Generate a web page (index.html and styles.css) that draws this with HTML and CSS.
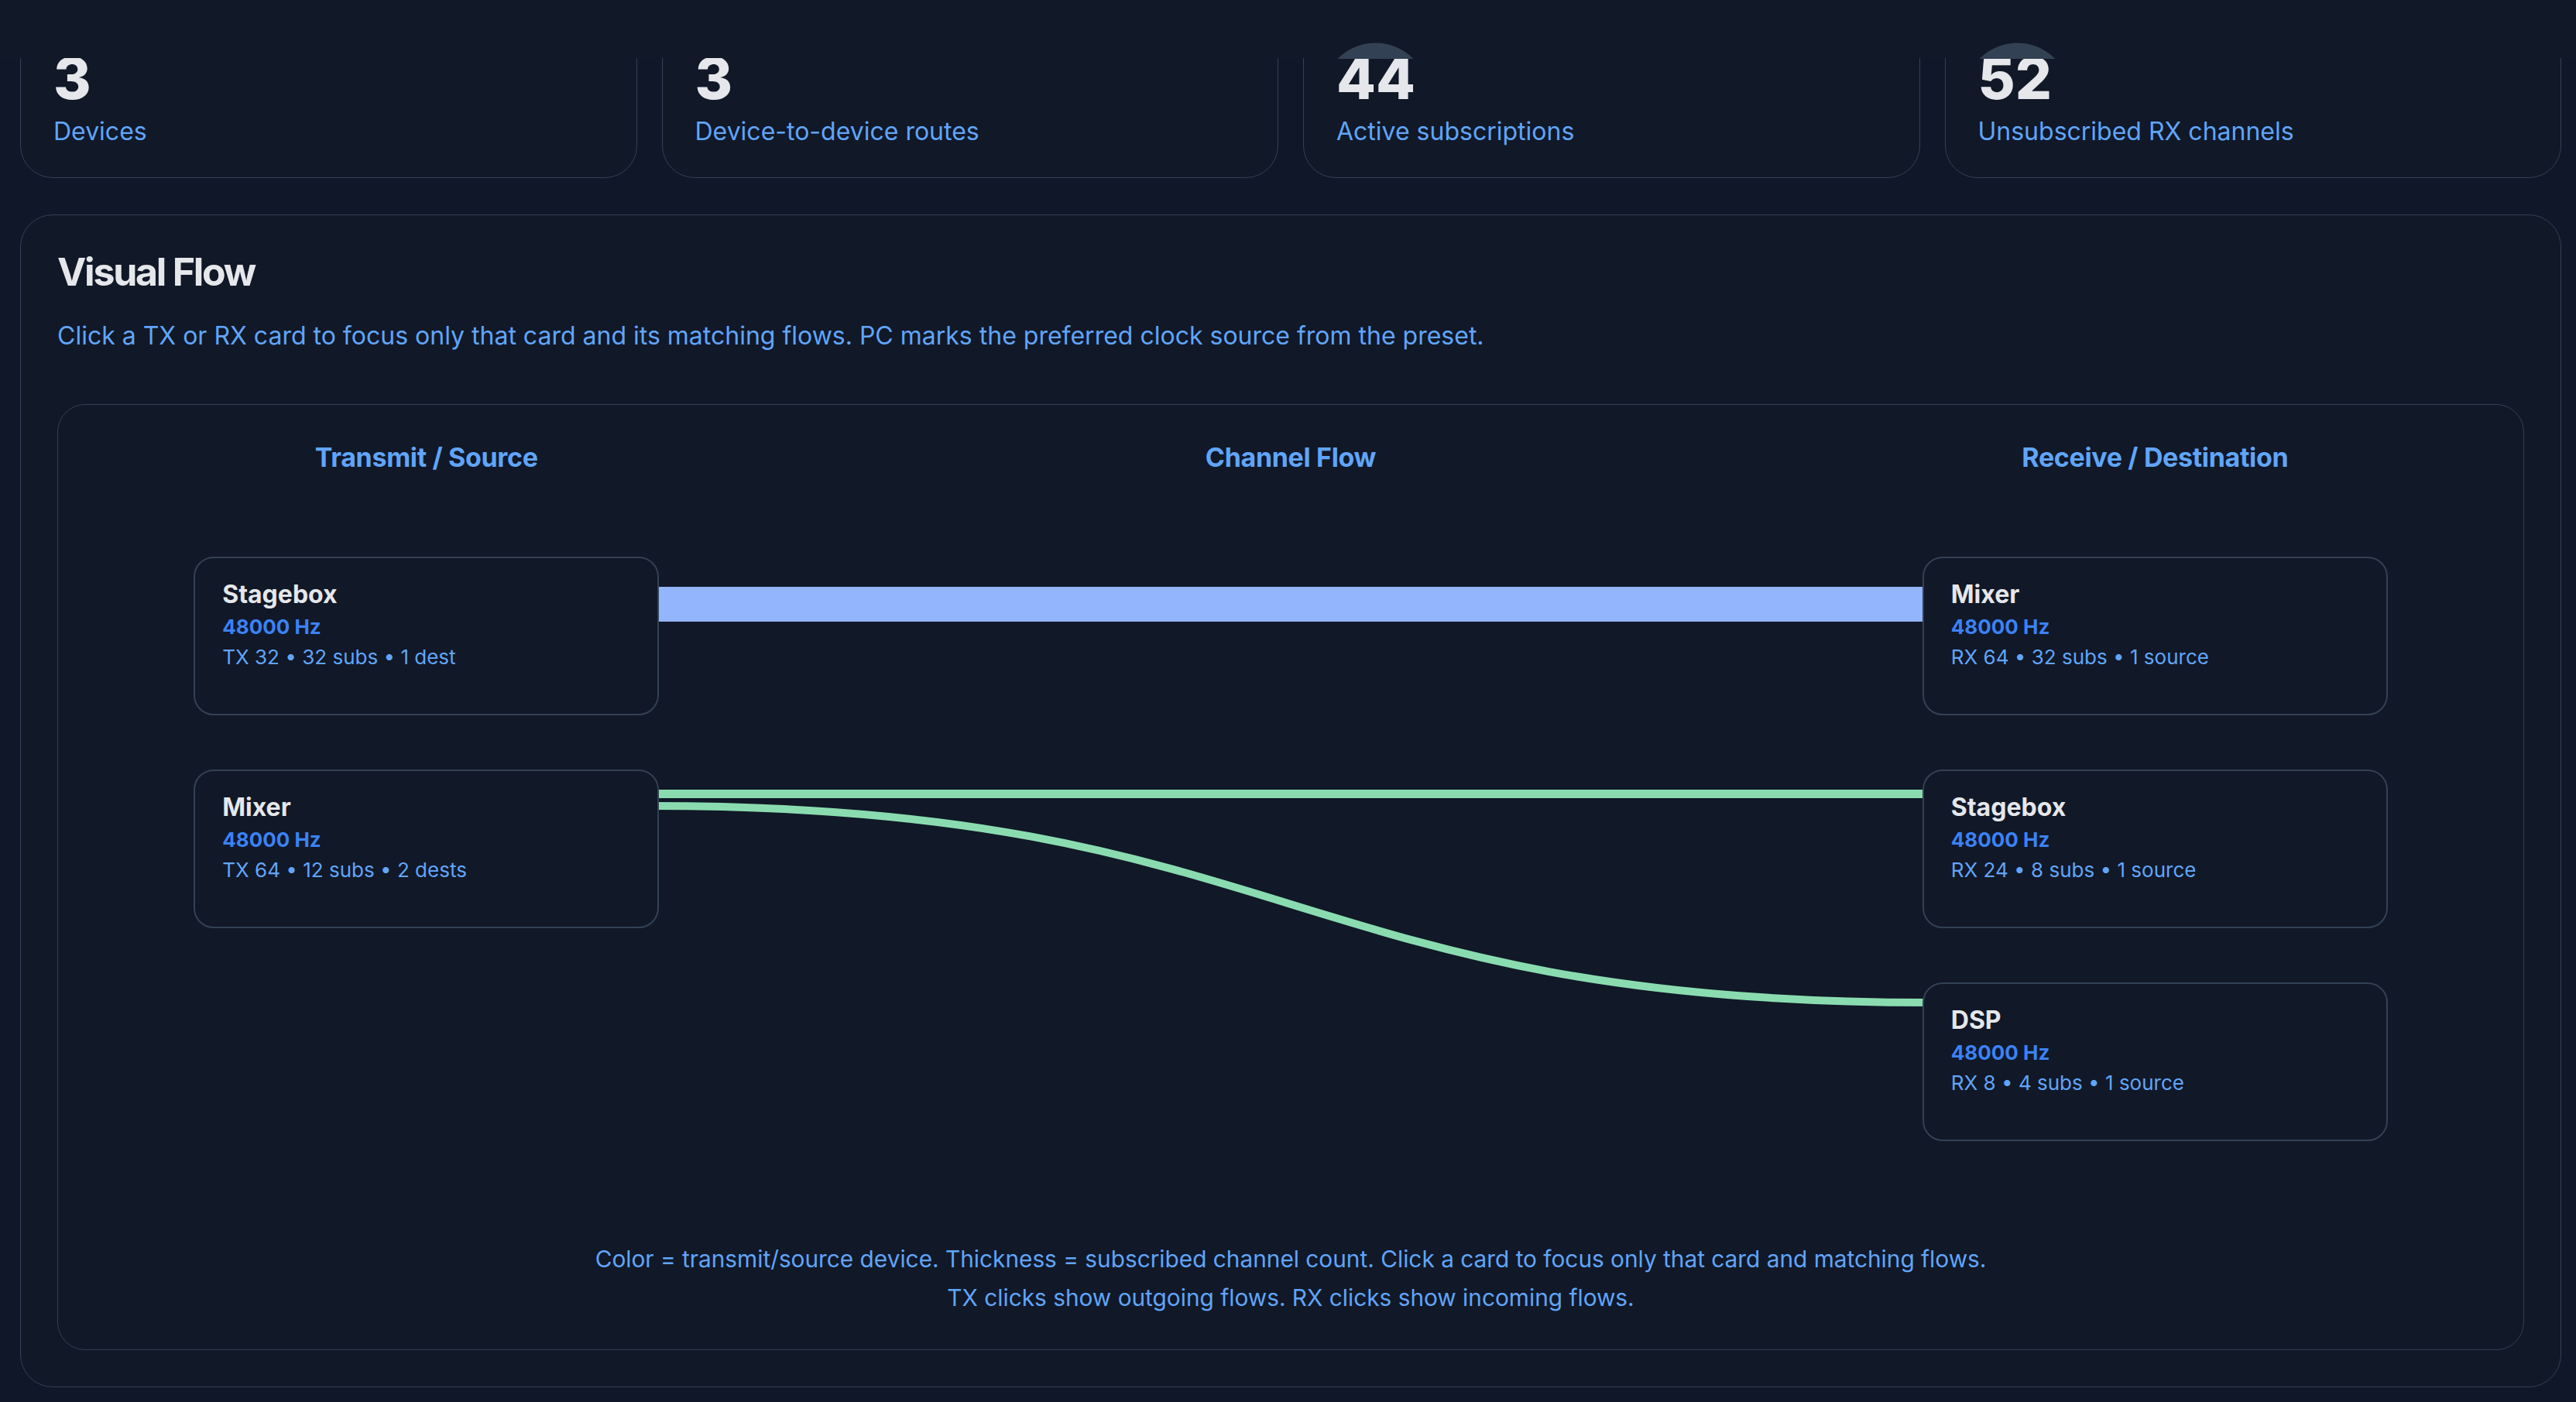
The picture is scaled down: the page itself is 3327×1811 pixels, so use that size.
FILE: index.html
```html
<!DOCTYPE html>
<html lang="en">
<head>
    <meta charset="UTF-8">
    <meta name="viewport" content="width=device-width, initial-scale=1.0">
    <title>Dante Routing Overview</title>
    <link rel="stylesheet" href="styles.css">
</head>
<body>
    <div class="topbar"></div>
    <main class="page">
        <section class="stats">
            <div class="stat">
                <div class="stat-value">3</div>
                <div class="stat-label">Devices</div>
            </div>
            <div class="stat">
                <div class="stat-value">3</div>
                <div class="stat-label">Device-to-device routes</div>
            </div>
            <div class="stat">
                <span class="stat-bump"></span>
                <div class="stat-value">44</div>
                <div class="stat-label">Active subscriptions</div>
            </div>
            <div class="stat">
                <span class="stat-bump"></span>
                <div class="stat-value">52</div>
                <div class="stat-label">Unsubscribed RX channels</div>
            </div>
        </section>

        <section class="panel">
            <h2>Visual Flow</h2>
            <p class="panel-desc">Click a TX or RX card to focus only that card and its matching flows. PC marks the preferred clock source from the preset.</p>

            <div class="flow">
                <div class="flow-heads">
                    <div>Transmit / Source</div>
                    <div>Channel Flow</div>
                    <div>Receive / Destination</div>
                </div>

                <div class="diagram">
                    <!-- links: colour = source device, width = subscribed channels -->
                    <svg class="links" viewBox="0 0 3088 755" preserveAspectRatio="none">
                        <path d="M720 61.5 L2368 61.5" stroke="#93b5fd" stroke-width="45" fill="none"/>
                        <path d="M720 306.5 L2368 306.5" stroke="#8adcb0" stroke-width="11" fill="none"/>
                        <path d="M720 322 C1544 322 1544 576 2368 576" stroke="#8adcb0" stroke-width="10" fill="none"/>
                    </svg>

                    <div class="col col-tx">
                        <div class="node">
                            <div class="node-name">Stagebox</div>
                            <div class="node-rate">48000 Hz</div>
                            <div class="node-meta">TX 32 • 32 subs • 1 dest</div>
                        </div>
                        <div class="node">
                            <div class="node-name">Mixer</div>
                            <div class="node-rate">48000 Hz</div>
                            <div class="node-meta">TX 64 • 12 subs • 2 dests</div>
                        </div>
                    </div>
                    <div class="col col-mid"></div>
                    <div class="col col-rx">
                        <div class="node">
                            <div class="node-name">Mixer</div>
                            <div class="node-rate">48000 Hz</div>
                            <div class="node-meta">RX 64 • 32 subs • 1 source</div>
                        </div>
                        <div class="node">
                            <div class="node-name">Stagebox</div>
                            <div class="node-rate">48000 Hz</div>
                            <div class="node-meta">RX 24 • 8 subs • 1 source</div>
                        </div>
                        <div class="node">
                            <div class="node-name">DSP</div>
                            <div class="node-rate">48000 Hz</div>
                            <div class="node-meta">RX 8 • 4 subs • 1 source</div>
                        </div>
                    </div>
                </div>

                <p class="flow-note">Color = transmit/source device. Thickness = subscribed channel count. Click a card to focus only that card and matching flows.<br>TX clicks show outgoing flows. RX clicks show incoming flows.</p>
            </div>
        </section>
    </main>
</body>
</html>
```

FILE: styles.css
```css
body {
    margin: 0;
    background: #0f1729;
    font-family: Inter, "Noto Sans", sans-serif;
    color: #e5e7eb;
}
.topbar {
    position: sticky;
    top: 0;
    z-index: 2;
    height: 75px;
    background: #111827;
}
.page {
    margin-top: -54px;
    padding: 0 19px 40px 26px;
}

/* summary cards */
.stats {
    display: grid;
    grid-template-columns: repeat(4, 1fr);
    gap: 32px;
}
.stat {
    position: relative;
    background: #111827;
    border: 1px solid #334155;
    border-radius: 42px;
    padding: 42px 42px 35px;
}
.stat-value {
    font-size: 74px;
    font-weight: 800;
    line-height: 74px;
    color: #e5e7eb;
}
.stat-label {
    margin-top: 8px;
    font-size: 32px;
    line-height: 48px;
    color: #60a5fa;
}
.stat-bump {
    position: absolute;
    z-index: 3;
    left: 43px;
    top: 33px;
    width: 99px;
    height: 21px;
    background: radial-gradient(circle at 50% 69px, #334155 68px, transparent 69px);
}

/* visual flow panel */
.panel {
    margin-top: 47px;
    background: #111827;
    border: 1px solid #334155;
    border-radius: 42px;
    padding: 47px;
}
.panel h2 {
    margin: 0;
    font-size: 50px;
    font-weight: 700;
    line-height: 52px;
    letter-spacing: -0.045em;
    color: #e5e7eb;
}
.panel-desc {
    margin: 33px 0 0;
    font-size: 32px;
    line-height: 48px;
    color: #60a5fa;
}
.flow {
    margin-top: 64px;
    border: 1px solid #334155;
    border-radius: 36px;
    padding: 48px 48px 42px;
}
.flow-heads,
.diagram {
    display: grid;
    grid-template-columns: 1fr 1.61fr 1fr;
}
.flow-heads div {
    text-align: center;
    font-size: 34px;
    font-weight: 700;
    line-height: 40px;
    letter-spacing: -0.01em;
    color: #60a5fa;
}
.diagram {
    position: relative;
    margin-top: 108px;
}
.links {
    position: absolute;
    top: 0;
    left: 0;
    width: 100%;
    height: 100%;
}
.col {
    display: flex;
    flex-direction: column;
    align-items: center;
    gap: 70px;
}
.node {
    position: relative;
    z-index: 1;
    box-sizing: border-box;
    width: 601px;
    height: 205px;
    background: #111827;
    border: 2px solid #334155;
    border-radius: 26px;
    padding: 27px 35px;
}
.node-name {
    font-size: 32px;
    font-weight: 700;
    line-height: 40px;
    color: #e5e7eb;
}
.node-rate {
    margin-top: 4px;
    font-size: 26px;
    font-weight: 700;
    line-height: 36px;
    color: #3b82f6;
}
.node-meta {
    margin-top: 3px;
    font-size: 26px;
    line-height: 36px;
    color: #60a5fa;
}
.flow-note {
    margin: 127px 0 0;
    text-align: center;
    font-size: 29.8px;
    line-height: 50px;
    color: #60a5fa;
}
```
